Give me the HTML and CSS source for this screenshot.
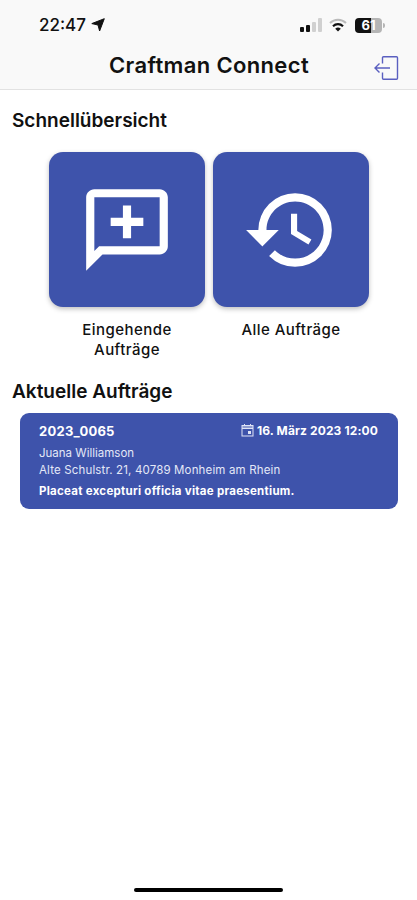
FILE: index.html
```
<!DOCTYPE html>
<html lang="de">
<head>
    <meta charset="UTF-8">
    <meta name="viewport" content="width=device-width, initial-scale=1.0">
    <title>Craftman Connect</title>
    <link rel="stylesheet" href="styles.css">
</head>
<body>
    <header class="header">
        <div class="status-bar">
            <div class="status-time">
                <span class="time">22:47</span>
                <svg class="location" width="14" height="14" viewBox="0 0 14 14"><path d="M13.3.7 8.6 13 7 7 .8 5.6z" fill="#111" stroke="#111" stroke-linejoin="round"/></svg>
            </div>
            <div class="status-icons">
                <svg class="signal" width="22" height="14" viewBox="0 0 22 14">
                    <rect x="0" y="9" width="4" height="5" rx="1" fill="#111"/>
                    <rect x="6" y="7" width="4" height="7" rx="1" fill="#111"/>
                    <rect x="12" y="4" width="4" height="10" rx="1" fill="#d0d0d0"/>
                    <rect x="18" y="0" width="4" height="14" rx="1" fill="#d0d0d0"/>
                </svg>
                <svg class="wifi" width="18" height="14" viewBox="0 0 18 14" fill="none">
                    <path d="M1 5a11.5 11.5 0 0 1 16 0" stroke="#bbb" stroke-width="2"/>
                    <path d="M4 8.2a7.2 7.2 0 0 1 10 0" stroke="#111" stroke-width="2.2"/>
                    <path d="M9 13.4 6.2 10.8a4 4 0 0 1 5.600 0z" fill="#111"/>
                </svg>
                <div class="battery"><span>61</span></div>
            </div>
        </div>
        <div class="title-bar">
            <h1>Craftman Connect</h1>
            <svg class="logout" width="26" height="26" viewBox="0 0 26 26" fill="none" stroke="#5a5fc0" stroke-width="1.4">
                <path d="M8.500 8.500V2.700q0-1 1-1h13q1 0 1 1v20.500q0 1-1 1h-13q-1 0-1-1V17.500"/>
                <path d="M16 13H1.500M5.500 8.500 1 13l4.500 4.500"/>
            </svg>
        </div>
    </header>

    <main>
        <h2>Schnellübersicht</h2>
        <div class="tiles">
            <div class="tile">
                <div class="tile-box">
                    <svg width="98" height="98" viewBox="0 0 24 24" fill="#fff">
                        <path d="M20 2H4c-1.100 0-2 .9-2 2v18l4-4h14c1.100 0 2-.9 2-2V4c0-1.100-.9-2-2-2zm0 14H5.170L4 17.170V4h16v12z"/>
                        <path d="M13 6h-2v3H8v2h3v3h2v-3h3V9h-3z"/>
                    </svg>
                </div>
                <p>Eingehende<br>Aufträge</p>
            </div>
            <div class="tile">
                <div class="tile-box">
                    <svg width="98" height="98" viewBox="0 0 24 24" fill="#fff">
                        <path d="M13 3a9 9 0 0 0-9 9H1l3.890 3.890.07.14L9 12H6c0-3.870 3.130-7 7-7s7 3.130 7 7-3.130 7-7 7c-1.930 0-3.680-.79-4.940-2.060l-1.420 1.420A8.950 8.950 0 0 0 13 21a9 9 0 0 0 0-18z"/>
                        <path d="M12 8v5l4.280 2.540.72-1.210-3.500-2.080V8z"/>
                    </svg>
                </div>
                <p>Alle Aufträge</p>
            </div>
        </div>

        <h2>Aktuelle Aufträge</h2>
        <div class="order">
            <div class="order-head">
                <span class="order-number">2023_0065</span>
                <span class="order-date">
                    <svg width="13" height="13" viewBox="0 0 13 13" fill="none" stroke="#dfe4f6">
                        <rect x="1" y="1.500" width="11" height="10.500"/>
                        <path d="M1 3h11M1 4.500h11M3.500 0v2M9.500 0v2"/>
                        <path d="M7 7h3v3H7z" fill="#dfe4f6" stroke="none"/>
                    </svg>
                    <span class="date-text">16. März 2023 12:00</span>
                </span>
            </div>
            <div class="order-line"><span class="customer">Juana Williamson</span></div>
            <div class="order-line"><span class="address">Alte Schulstr. 21, 40789 Monheim am Rhein</span></div>
            <div class="order-text"><span>Placeat excepturi officia vitae praesentium.</span></div>
        </div>
    </main>

    <div class="home-indicator"></div>
</body>
</html>
```
FILE: styles.css
```
* {
    box-sizing: border-box;
}
body {
    margin: 0;
    height: 900px;
    display: flex;
    flex-direction: column;
    background-color: #fff;
    color: #111;
    font-family: Inter, "Liberation Sans", sans-serif;
    overflow: hidden;
}
.header {
    height: 90px;
    background-color: #f9f9f9;
    border-bottom: 1px solid #e2e2e2;
}
.status-bar {
    height: 50px;
    padding: 0 30px 0 39px;
    display: flex;
    justify-content: space-between;
    align-items: center;
}
.status-time,
.status-icons {
    display: flex;
    align-items: center;
}
.status-time {
    gap: 5px;
    font-size: 17px;
    font-weight: 500;
}
.status-icons {
    gap: 7px;
}
.battery {
    position: relative;
    width: 27px;
    height: 15px;
    margin: 0 5px 0 1px;
    border-radius: 4px;
    background: linear-gradient(to right, #111 61%, #b5b5b5 61%);
    color: #fff;
    font-size: 13px;
    font-weight: 700;
    line-height: 15px;
    text-align: center;
}
.battery::after {
    content: "";
    position: absolute;
    right: -3px;
    top: 5px;
    width: 2px;
    height: 5px;
    border-radius: 0 2px 2px 0;
    background-color: #b5b5b5;
}
.title-bar {
    height: 32px;
    padding: 0 17px 0 18px;
    display: grid;
    grid-template-columns: 26px 1fr 26px;
    align-items: center;
}
h1 {
    grid-column: 2;
    margin: 0;
    padding-bottom: 2px;
    font-size: 22px;
    font-weight: 600;
    letter-spacing: 0.35px;
    line-height: 30px;
    text-align: center;
}
.logout {
    margin-top: 4px;
}
main {
    flex: 1;
    padding: 18px 19px 0 12px;
}
h2 {
    margin: 0;
    font-size: 19px;
    font-weight: 600;
    line-height: 26px;
}
.tiles {
    display: flex;
    gap: 8px;
    height: 207px;
    margin: 18px 0 20px 37px;
}
.tile {
    width: 156px;
}
.tile-box {
    height: 155px;
    display: flex;
    justify-content: center;
    align-items: center;
    border-radius: 14px;
    background-color: #3e53ab;
    box-shadow: 0 2px 5px rgba(0, 0, 0, 0.25);
}
.tile p {
    margin: 13px 0 0;
    font-size: 15px;
    font-weight: 500;
    letter-spacing: 0.45px;
    line-height: 20px;
    text-align: center;
}
.order {
    height: 96px;
    margin: 8px 0 0 8px;
    padding: 8px 20px 0 19px;
    border-radius: 9px;
    background-color: #3e53ab;
    color: #fff;
    font-size: 11.5px;
}
.order-head {
    height: 19px;
    display: flex;
    justify-content: space-between;
    align-items: center;
    font-weight: 700;
}
.order-number {
    font-size: 13px;
    letter-spacing: 0.25px;
}
.order-date {
    display: flex;
    align-items: center;
    gap: 3px;
    font-size: 12px;
    letter-spacing: 0.13px;
}
.order-line {
    line-height: 17px;
    margin-top: 5px;
    color: #e4e8f7;
}
.order-line + .order-line {
    margin-top: 0;
}
.address {
    letter-spacing: 0.15px;
}
.order-text {
    margin-top: 4px;
    font-weight: 700;
    letter-spacing: 0.27px;
    line-height: 17px;
}
.home-indicator {
    width: 149px;
    height: 4px;
    margin: 0 auto 8px;
    border-radius: 2px;
    background-color: #000;
}
```
